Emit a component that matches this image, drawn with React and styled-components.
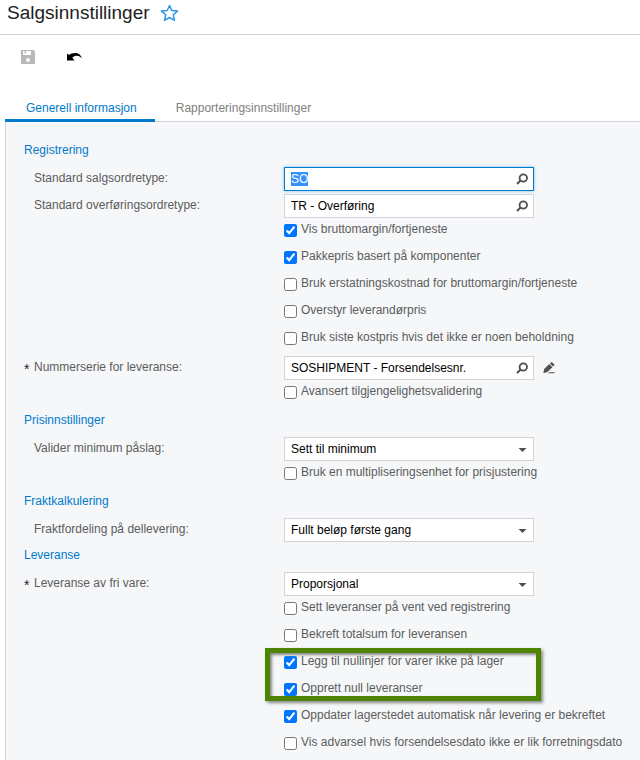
import React, { useEffect, useRef } from "react";
import styled, { createGlobalStyle, css } from "styled-components";

const GlobalStyle = createGlobalStyle`
  * {
    box-sizing: border-box;
  }
  body {
    margin: 0;
    background: #fff;
    color: #5c5c5c;
    font: 12px/16px "Liberation Sans", Arial, sans-serif;
  }
  button, input, select {
    font: inherit;
  }
`;

const Header = styled.header`
  display: flex;
  align-items: center;
  gap: 10px;
  height: 35px;
  padding: 0 7px 9px;
  border-bottom: 1px solid #d2d4d7;
`;

const Title = styled.h1`
  margin: 0;
  color: #222;
  font-size: 19px;
  font-weight: 400;
  line-height: 24px;
`;

const IconButton = styled.button`
  display: flex;
  align-items: center;
  justify-content: center;
  padding: 0;
  border: 0;
  background: none;
  color: ${(props) => props.$color || "#505050"};
`;

const Toolbar = styled.div`
  display: flex;
  align-items: center;
  gap: 30px;
  height: 60px;
  padding: 0 20px 17px;
`;

const Tabs = styled.div`
  display: flex;
  height: 27px;
  margin-left: 5px;
  border-bottom: 1px solid #d2d4d7;
`;

const Tab = styled.button`
  height: 27px;
  padding: 2px 18px 0 21px;
  border: 0;
  border-bottom: 3px solid ${(props) => (props.$active ? "#007acc" : "transparent")};
  background: none;
  color: ${(props) => (props.$active ? "#007acc" : "#808080")};
`;

const Panel = styled.form`
  margin-left: 5px;
  padding: 17px 18px 0;
  border-left: 1px solid #d2d4d7;
  background: #f5f7f9;
`;

const SectionTitle = styled.h2`
  height: 27px;
  margin: 0;
  padding-top: 3px;
  color: #007acc;
  font-size: 12px;
  font-weight: 400;
`;

const Row = styled.div`
  display: grid;
  grid-template-columns: 250px 250px auto;
  justify-content: start;
  height: 27px;
  padding: 1px 0 2px 10px;
`;

const Label = styled.label`
  display: flex;
  padding-top: 3px;
`;

const Required = styled.span`
  width: 10px;
  margin-left: -10px;
  padding-top: 2px;
  color: #222;
  font-size: 14px;
`;

const Field = styled.div`
  display: grid;
  align-items: center;
  height: 24px;
  padding-right: 5px;
  border: 1px solid #d2d4d7;
  background: #fff;
  color: #505050;
  grid-template-columns: 1fr 12px;

  ${(props) =>
    props.$active &&
    css`
      border-color: #007acc;
      box-shadow: 0 0 3px #7dbdea;
    `}
`;

const TextInput = styled.input`
  width: 100%;
  height: 22px;
  padding: 0 6px;
  border: 0;
  outline: 0;
  background: none;
  color: #000;
  &::selection {
    background: #3390ff;
    color: #fff;
  }
`;

const Select = styled.select`
  grid-area: 1 / 1 / 2 / 3;
  width: 100%;
  height: 22px;
  padding: 0 6px;
  border: 0;
  outline: 0;
  appearance: none;
  background: none;
  color: #000;
`;

const Arrow = styled.svg`
  grid-area: 1 / 2 / 2 / 3;
  pointer-events: none;
`;

const EditButton = styled(IconButton)`
  padding-left: 9px;
`;

const CheckRow = styled.label`
  display: flex;
  align-items: flex-start;
  gap: 4px;
  height: 27px;
  margin-left: 260px;
  padding-top: 1px;
  white-space: nowrap;
`;

const CheckInput = styled.input`
  flex: none;
  width: 13px;
  height: 13px;
  margin: 3px 0 0;
  accent-color: #0075ff;
`;

const Highlighted = styled.div`
  position: relative;
`;

const Frame = styled.div`
  position: absolute;
  top: -4px;
  bottom: 5px;
  left: 241px;
  width: 276px;
  border: 5px solid #4e8500;
  box-shadow: 2px 2px 3px #888, inset 2px 2px 3px #888;
  pointer-events: none;
`;

const StarIcon = () => (
  <svg width="19" height="18" viewBox="0 0 19 18" fill="none" stroke="currentColor">
    <path
      d="M9.500 1.500L11.800 6.500L17.500 7.100L13.300 10.800L14.500 16.300L9.500 13.500L4.500 16.300L5.700 10.800L1.500 7.100L7.200 6.500z"
      strokeWidth="1.500"
      strokeLinejoin="round"
    />
  </svg>
);

const SearchIcon = () => (
  <svg width="12" height="12" viewBox="0 0 12 12" fill="none" stroke="currentColor">
    <circle cx="7.300" cy="5" r="3.700" strokeWidth="1.800" />
    <path d="M4.600 7.600L1 11" strokeWidth="2" />
  </svg>
);

const SaveIcon = () => (
  <svg width="16" height="16" viewBox="0 0 16 16" fill="currentColor">
    <path
      fillRule="evenodd"
      d="M1 1h12.500L15 2.500V15H1zM3 2v4h8V2H6v2.500H4.500V2zM8 9a2 2 0 1 0 0 4a2 2 0 0 0 0-4z"
    />
  </svg>
);

const UndoIcon = () => (
  <svg width="16" height="10" viewBox="0 0 16 10" fill="currentColor">
    <path d="M1 1.500L3 3C7 0 14.500 0 15.800 6.500C13.500 3 9.500 2.800 6.300 5.500L8.500 8.500H1z" />
  </svg>
);

const PencilIcon = () => (
  <svg width="12" height="12" viewBox="0 0 12 12" fill="currentColor">
    <path d="M1.200 7L6.300 2.100L9.400 5.200L4.400 10L.3 11.200zM7 1.500L8.300.2Q8.700 0 9 .2L11.300 2.500Q11.500 3 11.300 3.300L10.100 4.500zM6 10.300h5.500v1H5z" />
  </svg>
);

function TextField({ id, label, value, required, active, editable }) {
  const input = useRef(null);

  useEffect(() => {
    if (active) {
      input.current.focus();
      input.current.select();
    }
  }, [active]);

  return (
    <Row>
      <Label htmlFor={id}>
        {required && <Required>*</Required>}
        {label}:
      </Label>
      <Field $active={active}>
        <TextInput id={id} ref={input} defaultValue={value} />
        <IconButton type="button" aria-label="Søk">
          <SearchIcon />
        </IconButton>
      </Field>
      {editable && (
        <EditButton type="button" aria-label="Rediger">
          <PencilIcon />
        </EditButton>
      )}
    </Row>
  );
}

function SelectField({ id, label, value, required }) {
  return (
    <Row>
      <Label htmlFor={id}>
        {required && <Required>*</Required>}
        {label}:
      </Label>
      <Field>
        <Select id={id} defaultValue={value}>
          <option>{value}</option>
        </Select>
        <Arrow width="12" height="6" viewBox="0 0 12 6" fill="currentColor">
          <path d="M2.500 2h8L6.500 6z" />
        </Arrow>
      </Field>
    </Row>
  );
}

function Check({ children, checked }) {
  return (
    <CheckRow>
      <CheckInput type="checkbox" defaultChecked={checked} />
      {children}
    </CheckRow>
  );
}

export default function App() {
  return (
    <>
      <GlobalStyle />
      <Header>
        <Title>Salgsinnstillinger</Title>
        <IconButton $color="#2b97e3" aria-label="Favoritt">
          <StarIcon />
        </IconButton>
      </Header>
      <Toolbar>
        <IconButton $color="#b8b8b8" aria-label="Lagre">
          <SaveIcon />
        </IconButton>
        <IconButton $color="#000" aria-label="Angre">
          <UndoIcon />
        </IconButton>
      </Toolbar>
      <Tabs role="tablist">
        <Tab role="tab" aria-selected="true" $active>
          Generell informasjon
        </Tab>
        <Tab role="tab" aria-selected="false">
          Rapporteringsinnstillinger
        </Tab>
      </Tabs>
      <Panel>
        <SectionTitle>Registrering</SectionTitle>
        <TextField id="orderType" label="Standard salgsordretype" value="SO" active />
        <TextField id="transferType" label="Standard overføringsordretype" value="TR - Overføring" />
        <Check checked>Vis bruttomargin/fortjeneste</Check>
        <Check checked>Pakkepris basert på komponenter</Check>
        <Check>Bruk erstatningskostnad for bruttomargin/fortjeneste</Check>
        <Check>Overstyr leverandørpris</Check>
        <Check>Bruk siste kostpris hvis det ikke er noen beholdning</Check>
        <TextField
          id="shipmentSeries"
          label="Nummerserie for leveranse"
          value="SOSHIPMENT - Forsendelsesnr."
          required
          editable
        />
        <Check>Avansert tilgjengelighetsvalidering</Check>

        <SectionTitle>Prisinnstillinger</SectionTitle>
        <SelectField id="markup" label="Valider minimum påslag" value="Sett til minimum" />
        <Check>Bruk en multipliseringsenhet for prisjustering</Check>

        <SectionTitle>Fraktkalkulering</SectionTitle>
        <SelectField id="freight" label="Fraktfordeling på dellevering" value="Fullt beløp første gang" />

        <SectionTitle>Leveranse</SectionTitle>
        <SelectField id="freeItem" label="Leveranse av fri vare" value="Proporsjonal" required />
        <Check>Sett leveranser på vent ved registrering</Check>
        <Check>Bekreft totalsum for leveransen</Check>
        <Highlighted>
          <Check checked>Legg til nullinjer for varer ikke på lager</Check>
          <Check checked>Opprett null leveranser</Check>
          <Frame />
        </Highlighted>
        <Check checked>Oppdater lagerstedet automatisk når levering er bekreftet</Check>
        <Check>Vis advarsel hvis forsendelsesdato ikke er lik forretningsdato</Check>
      </Panel>
    </>
  );
}
